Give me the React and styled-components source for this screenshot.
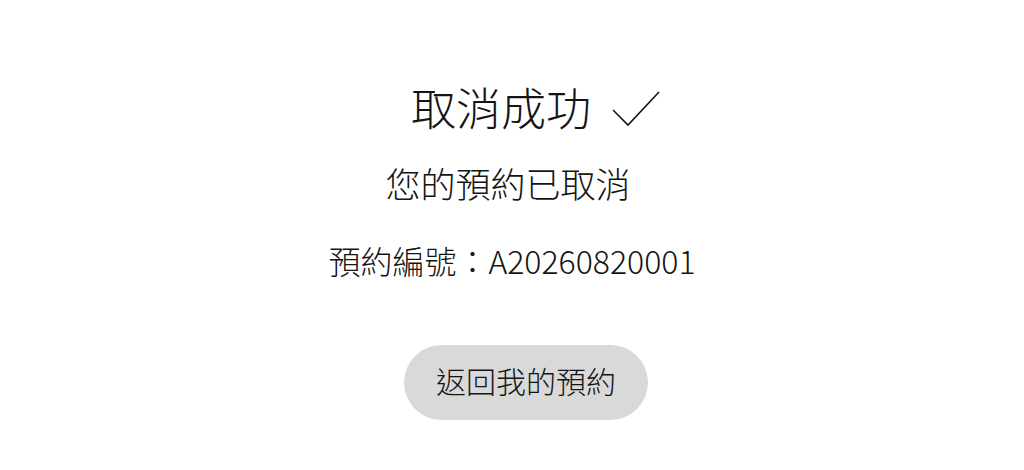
import React from "react";
import { styled, createGlobalStyle } from "styled-components";

const GlobalStyle = createGlobalStyle`
    body {
        margin: 0;
        background: #ffffff;
        font-family: "Noto Sans CJK TC", "Noto Sans", sans-serif;
        color: #141414;
    }
`;

function CheckIcon() {
    return (
        <CheckSvg viewBox="0 0 48 44" aria-hidden="true">
            <polyline points="1,25 16,40 47,7" />
        </CheckSvg>
    );
}

function App() {
    return (
        <Container>
            <GlobalStyle />
            <TitleRow>
                <Title>取消成功</Title>
                <CheckIcon />
            </TitleRow>
            <Subtitle>您的預約已取消</Subtitle>
            <OrderNumber>預約編號：A20260820001</OrderNumber>
            <BackButton type="button">返回我的預約</BackButton>
        </Container>
    );
}

export default App;

const Container = styled.div`
    display: flex;
    flex-direction: column;
    align-items: center;
    padding-top: 83px;
`;
const TitleRow = styled.div`
    display: flex;
    align-items: center;
    gap: 21px;
    margin-left: 47px;
`;
const Title = styled.h1`
    margin: 0;
    font-size: 45px;
    line-height: 1;
    font-weight: 300;
`;
const CheckSvg = styled.svg`
    width: 48px;
    height: 44px;
    fill: none;
    stroke: #141414;
    stroke-width: 1.6;
    margin-top: 2px;
`;
const Subtitle = styled.p`
    margin: 36px 8px 0 0;
    font-size: 35px;
    line-height: 1;
    font-weight: 300;
`;
const OrderNumber = styled.p`
    margin: 44px 0 0 0;
    font-size: 32px;
    line-height: 1;
    font-weight: 300;
`;
const BackButton = styled.button`
    margin-top: 69px;
    margin-left: 28px;
    padding: 20px 32px 25px;
    border: none;
    border-radius: 999px;
    background: #d9d9d9;
    color: #141414;
    font-family: "Noto Sans CJK TC", "Noto Sans", sans-serif;
    font-size: 30px;
    line-height: 1;
    font-weight: 300;
    cursor: pointer;
`;
